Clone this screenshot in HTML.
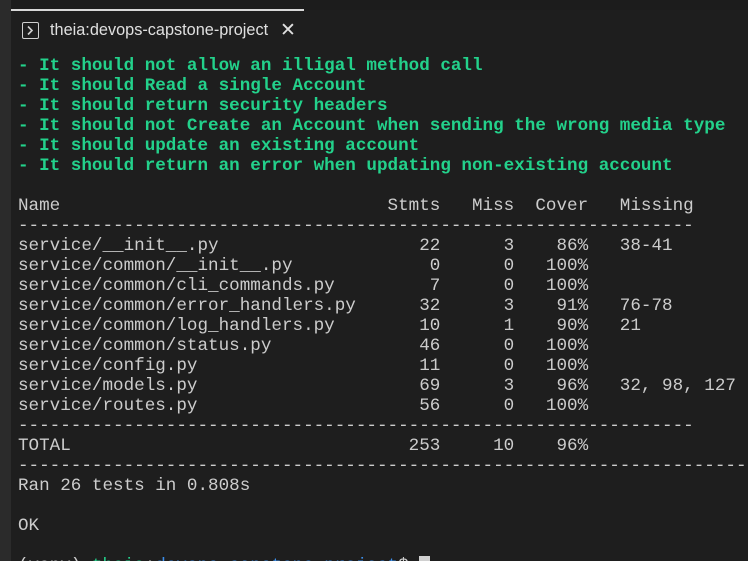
<!DOCTYPE html>
<html><head><meta charset="utf-8"><style>
html,body{margin:0;padding:0;background:#1e1e1e;width:748px;height:561px;overflow:hidden;position:relative}
.strip{position:absolute;left:0;top:0;width:11px;height:561px;background:#2b2b2b}
.top{position:absolute;left:11px;top:0;width:737px;height:10px;background:#1c1c1c}
.topline{position:absolute;left:11px;top:9px;width:293px;height:2px;background:#d8d8d8}
.tab{position:absolute;left:22px;top:21px;font:16.3px "Liberation Sans",sans-serif;color:#e0e0e0;white-space:nowrap}
.icon{position:absolute;left:22px;top:22px;width:15px;height:15px;border:1.5px solid #d0d0d0;border-radius:2px}
.term{position:absolute;left:18px;top:56px;font:17.6px/20px "Liberation Mono",monospace;color:#cccccc;white-space:pre;margin:0}
.g{color:#23d18b;font-weight:bold}
.gn{color:#23d18b}.b{color:#3b8eea}
.cur{background:#d0d0d0;color:#d0d0d0}
</style></head><body>
<div class="strip"></div><div class="top"></div><div class="topline"></div>
<div class="icon"><svg width="15" height="15" viewBox="0 0 15 15" style="position:absolute;left:0;top:0"><path d="M5 3.5 L9 7.5 L5 11.5" fill="none" stroke="#d0d0d0" stroke-width="1.6"/></svg></div>
<div class="tab" style="left:50px">theia:devops-capstone-project</div>
<div class="tab" style="left:280px;font-size:19px;top:19px">✕</div>
<pre class="term"><span class="g">- It should not allow an illigal method call
- It should Read a single Account
- It should return security headers
- It should not Create an Account when sending the wrong media type
- It should update an existing account
- It should return an error when updating non-existing account</span>

Name                               Stmts   Miss  Cover   Missing
----------------------------------------------------------------
service/__init__.py                   22      3    86%   38-41
service/common/__init__.py             0      0   100%
service/common/cli_commands.py         7      0   100%
service/common/error_handlers.py      32      3    91%   76-78
service/common/log_handlers.py        10      1    90%   21
service/common/status.py              46      0   100%
service/config.py                     11      0   100%
service/models.py                     69      3    96%   32, 98, 127
service/routes.py                     56      0   100%
----------------------------------------------------------------
TOTAL                                253     10    96%
------------------------------------------------------------------------
Ran 26 tests in 0.808s

OK

(venv) <span class="gn">theia</span>:<span class="b">devops-capstone-project</span>$ <span class="cur">_</span></pre>
</body></html>
